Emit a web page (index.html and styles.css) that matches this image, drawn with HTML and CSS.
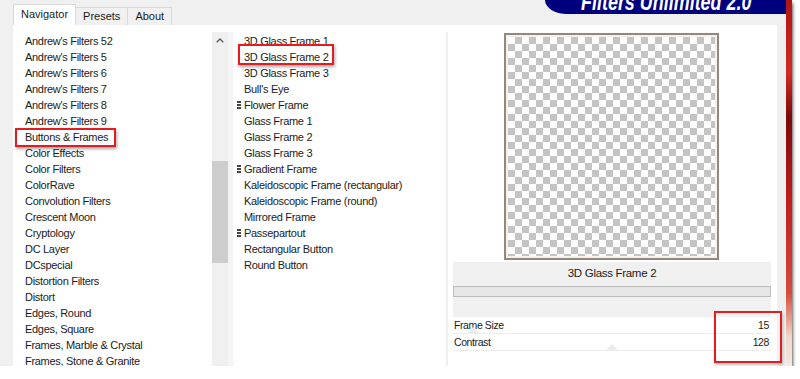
FILE: index.html
```html
<!DOCTYPE html>
<html lang="en">
<head>
    <meta charset="UTF-8">
    <title>Filters Unlimited 2.0</title>
    <link rel="stylesheet" href="styles.css">
</head>
<body>
    <div class="frame">
        <div class="window">
            <div class="topbar">
                <div class="tabs">
                    <div class="tab active">Navigator</div>
                    <div class="tab">Presets</div>
                    <div class="tab">About</div>
                </div>
                <div class="banner"><span>Filters Unlimited 2.0</span></div>
            </div>

            <div class="page">
                <div class="cats">
                    <div class="row">Andrew's Filters 52</div>
                    <div class="row">Andrew's Filters 5</div>
                    <div class="row">Andrew's Filters 6</div>
                    <div class="row">Andrew's Filters 7</div>
                    <div class="row">Andrew's Filters 8</div>
                    <div class="row">Andrew's Filters 9</div>
                    <div class="row marked">Buttons &amp; Frames<span class="mark mark-cat"></span></div>
                    <div class="row">Color Effects</div>
                    <div class="row">Color Filters</div>
                    <div class="row">ColorRave</div>
                    <div class="row">Convolution Filters</div>
                    <div class="row">Crescent Moon</div>
                    <div class="row">Cryptology</div>
                    <div class="row">DC Layer</div>
                    <div class="row">DCspecial</div>
                    <div class="row">Distortion Filters</div>
                    <div class="row">Distort</div>
                    <div class="row">Edges, Round</div>
                    <div class="row">Edges, Square</div>
                    <div class="row">Frames, Marble &amp; Crystal</div>
                    <div class="row">Frames, Stone &amp; Granite</div>
                </div>

                <div class="scrollbar">
                    <div class="arrow">
                        <svg width="8" height="5" viewBox="0 0 8 5"><polyline points="0.7,4.3 4,1 7.3,4.3" fill="none" stroke="#5a5a5a" stroke-width="1.3"/></svg>
                    </div>
                    <div class="thumb"></div>
                </div>

                <div class="filters">
                    <div class="row">3D Glass Frame 1</div>
                    <div class="row marked">3D Glass Frame 2<span class="mark mark-filter"></span></div>
                    <div class="row">3D Glass Frame 3</div>
                    <div class="row">Bull's Eye</div>
                    <div class="row"><span class="grip"></span>Flower Frame</div>
                    <div class="row">Glass Frame 1</div>
                    <div class="row">Glass Frame 2</div>
                    <div class="row">Glass Frame 3</div>
                    <div class="row"><span class="grip"></span>Gradient Frame</div>
                    <div class="row">Kaleidoscopic Frame (rectangular)</div>
                    <div class="row">Kaleidoscopic Frame (round)</div>
                    <div class="row">Mirrored Frame</div>
                    <div class="row"><span class="grip"></span>Passepartout</div>
                    <div class="row">Rectangular Button</div>
                    <div class="row">Round Button</div>
                </div>

                <div class="preview-pane">
                    <div class="preview">
                        <div class="checker"></div>
                    </div>
                    <div class="caption">
                        <div class="caption-title">3D Glass Frame 2</div>
                        <div class="progress"></div>
                    </div>
                    <div class="params">
                        <div class="param">
                            <span>Frame Size</span><span>15</span>
                            <i class="knob" style="left: 14px"></i>
                        </div>
                        <div class="param">
                            <span>Contrast</span><span>128</span>
                            <i class="knob" style="left: 153px"></i>
                        </div>
                        <span class="mark mark-values"></span>
                    </div>
                </div>
            </div>
        </div>
        <div class="edge"></div>
    </div>
</body>
</html>
```

FILE: styles.css
```css
body { margin: 0; background: #fff; font-family: "Liberation Sans", Arial, sans-serif; font-size: 11px; color: #1b1b1b; }

.frame { display: flex; width: 792px; height: 366px; box-shadow: 1px 3px 3px rgba(40, 40, 40, 0.75); }
.window { width: 786px; background: #f0f0f0; display: flex; flex-direction: column; }
.edge { width: 6px; background: linear-gradient(180deg, #b01515 0%, #d22a22 20%, #7a0a0a 32%, #c21d1d 55%, #d64a3c 80%, #efd6c8 92%, #f5e9e2 100%); }

/* tabs */
.topbar { height: 25px; position: relative; flex: none; }
.tabs { display: flex; align-items: flex-end; height: 25px; padding-left: 13px; }
.tab { height: 17px; line-height: 17px; padding: 0 7px; border: 1px solid #d9d9d9; border-bottom: none; border-left: none; background: #f0f0f0; }
.tab.active { height: 20px; line-height: 18px; padding: 0 7px; background: #fff; border-left: 1px solid #d9d9d9; }
.banner { position: absolute; left: 545px; top: 0; width: 241px; height: 14px; background: #00007e; border-bottom-left-radius: 22px 14px; overflow: hidden; }
.banner span { display: block; margin: -9px 0 0 36px; font-size: 23px; line-height: 23px; font-weight: bold; font-style: italic; color: #fff; white-space: nowrap; transform: scaleX(0.78); transform-origin: left top; }

/* page */
.page { display: flex; height: 341px; margin: 0 9px 0 13px; background: #fff; }
.row { height: 16px; line-height: 16px; white-space: nowrap; letter-spacing: -0.3px; position: relative; }

.cats { width: 187px; padding: 8px 0 0 12px; overflow: hidden; }
.scrollbar { width: 16px; margin-top: 7px; background: #f0f0f0; }
.arrow { height: 16px; display: flex; justify-content: center; align-items: center; }
.thumb { height: 102px; margin-top: 113px; background: #cdcdcd; }

.filters { width: 202px; margin-top: 7px; padding: 1px 0 0 11px; border-left: 5px solid #f4f4f4; border-right: 2px solid #efefef; overflow: hidden; }
.grip { position: absolute; left: -7px; top: 4px; width: 4px; height: 8px; background: repeating-linear-gradient(180deg, #444 0 2px, transparent 2px 3px); }

.mark { position: absolute; border: 2px solid #e41b1f; box-shadow: 1px 2px 3px rgba(0, 0, 0, 0.35); }
.mark-cat { left: -10px; top: -1px; width: 97px; height: 15px; }
.mark-filter { left: -6px; top: -5px; width: 92px; height: 17px; }

/* preview side */
.preview-pane { flex: 1; margin-left: 3px; padding-top: 8px; position: relative; }
.preview { margin-left: 53px; border: 2px solid #93887e; background: #f6f1ea; padding: 2px; width: 207px; height: 219px; }
.checker { width: 100%; height: 100%; background-color: #fff; background-image: conic-gradient(#c4c4c4 25%, #fff 0 50%, #c4c4c4 0 75%, #fff 0); background-size: 14px 14px; }

.caption { width: 318px; margin: 2px 0 0 2px; height: 55px; background: #f0f0f0; }
.caption-title { height: 24px; line-height: 22px; text-align: center; font-size: 11.5px; letter-spacing: -0.3px; }
.progress { height: 9px; border: 1px solid #bdbdbd; background: #e6e6e6; }

.params { width: 318px; margin-left: 2px; position: relative; }
.param { display: flex; justify-content: space-between; height: 16px; line-height: 16px; padding: 0 2px 0 1px; border-bottom: 1px solid #ececec; font-size: 10.5px; letter-spacing: -0.4px; position: relative; }
.knob { position: absolute; top: 10px; width: 0; height: 0; border: 6px solid transparent; border-bottom: 6px solid #ebebeb; border-top: none; }
.mark-values { right: -11px; top: -6px; width: 64px; height: 48px; box-shadow: 1px 2px 3px rgba(0, 0, 0, 0.25); }
```
